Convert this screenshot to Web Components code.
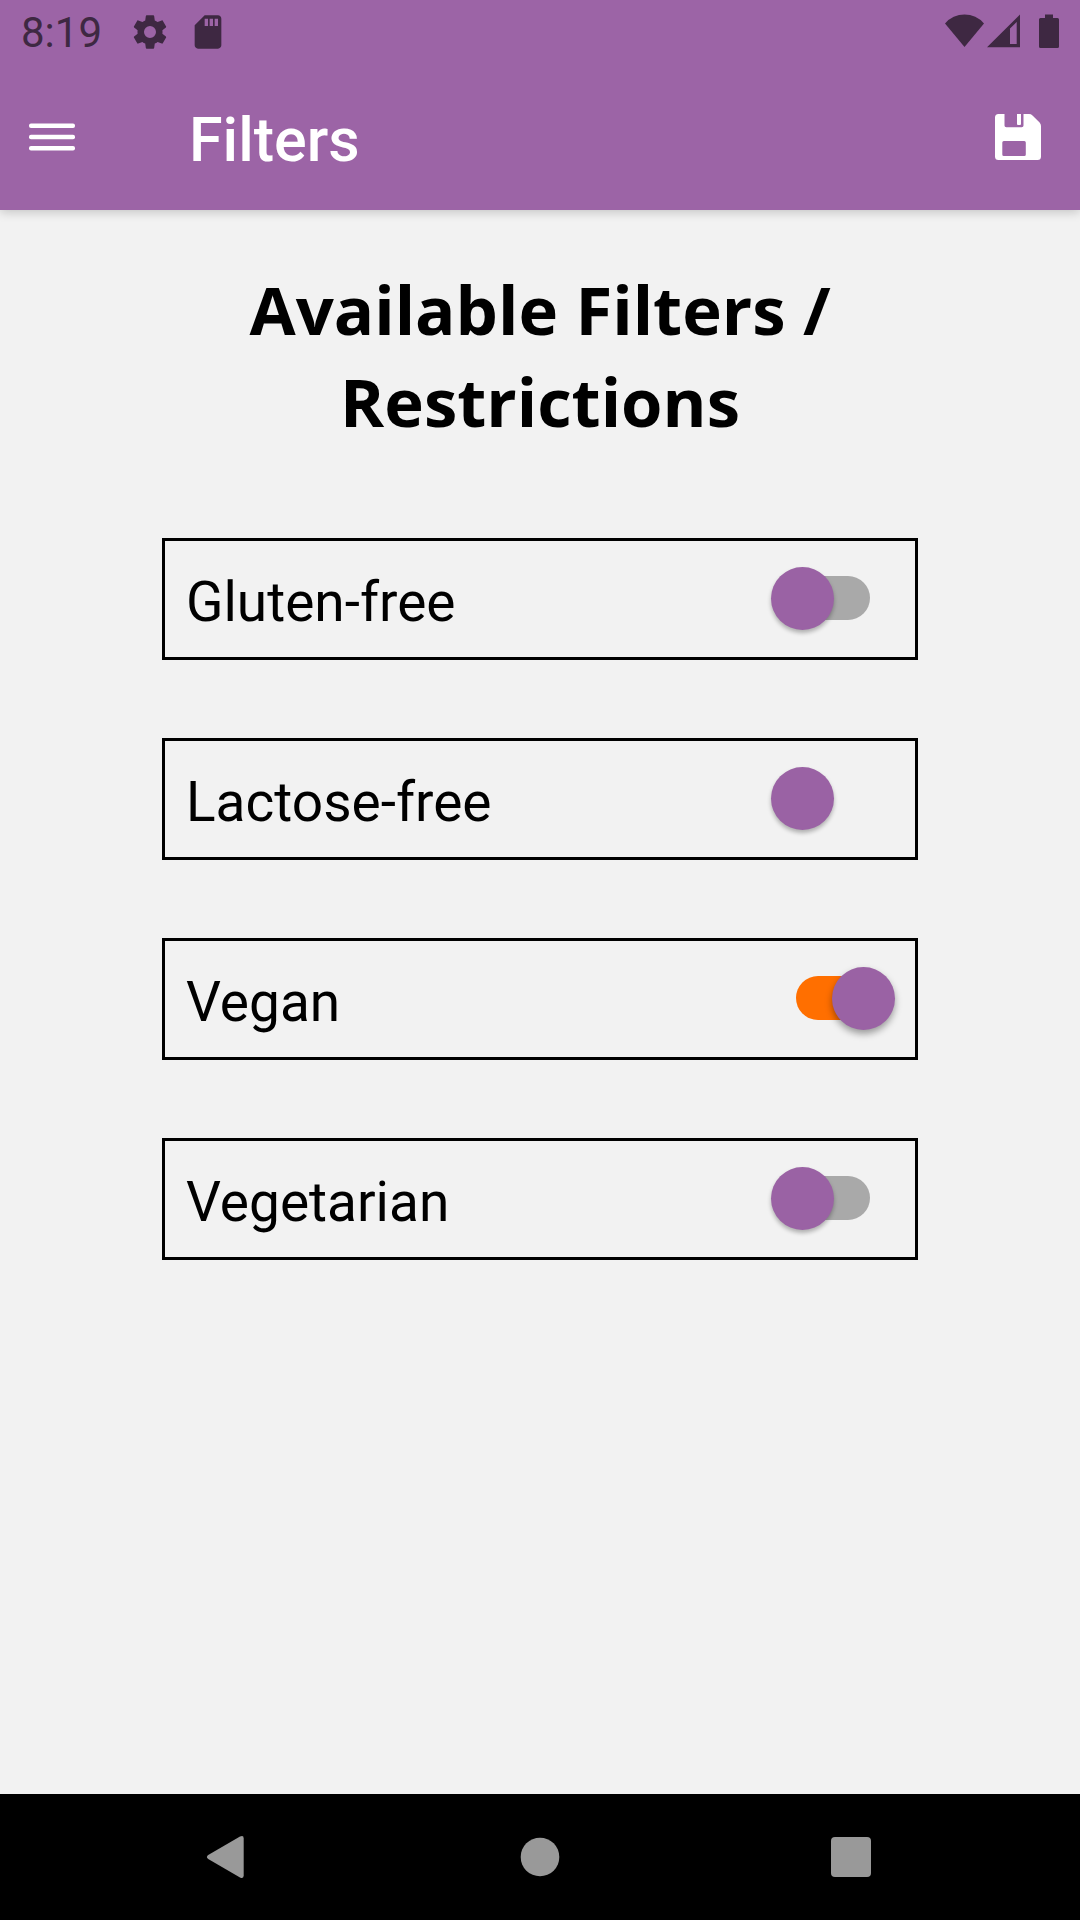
<!DOCTYPE html>
<html lang="en">
<head>
<meta charset="utf-8">
<meta name="viewport" content="width=device-width, initial-scale=1">
<title>Filters</title>
<style>
  html, body { margin: 0; min-height: 100%; }
  body {
    --primary: #9c64a6;
    --accent: #ff6f00;
    --surface: #f2f2f2;
    --gutter: 21px;
    background: var(--surface);
    color: #000;
    font-family: Roboto, "Noto Sans", sans-serif;
  }
</style>
</head>
<body>
<filters-app></filters-app>

<script>
const define = (name, markup) => {
  const template = document.createElement('template');
  template.innerHTML = markup;
  customElements.define(name, class extends HTMLElement {
    constructor() {
      super();
      this.attachShadow({ mode: 'open' }).append(template.content.cloneNode(true));
    }
  });
};

define('status-bar', `
  <style>
    :host {
      display: flex; align-items: center; justify-content: space-between;
      height: 63px; padding: 0 var(--gutter);
      color: #3e2842;
    }
    div { display: flex; align-items: center; }
    time { font-size: 42px; line-height: 60px; padding-top: 3px; margin-right: 28px; }
    svg { display: block; fill: currentColor; }
    .notices svg + svg { margin-left: 18px; }
    .system svg { margin-left: 3px; }
    .system .battery { margin-left: 19px; }
  </style>
  <div class="notices">
    <time>8:19</time>
    <svg width="40" height="40" viewBox="0 0 24 24"><path d="M19.43 12.98c.04-.32.07-.64.07-.98s-.03-.66-.07-.98l2.11-1.65c.19-.15.24-.42.12-.64l-2-3.46c-.12-.22-.39-.3-.61-.22l-2.49 1c-.52-.4-1.08-.73-1.69-.98l-.38-2.65C14.46 2.18 14.25 2 14 2h-4c-.25 0-.46.18-.49.42l-.38 2.65c-.61.25-1.17.59-1.69.98l-2.49-1c-.23-.09-.49 0-.61.22l-2 3.46c-.13.22-.07.49.12.64l2.11 1.65c-.04.32-.07.65-.07.98s.03.66.07.98l-2.11 1.65c-.19.15-.24.42-.12.64l2 3.46c.12.22.39.3.61.22l2.49-1c.52.4 1.08.73 1.69.98l.38 2.65c.03.24.24.42.49.42h4c.25 0 .46-.18.49-.42l.38-2.65c.61-.25 1.17-.59 1.69-.98l2.49 1c.23.09.49 0 .61-.22l2-3.46c.12-.22.07-.49-.12-.64l-2.11-1.65zM12 15.6a3.6 3.6 0 1 1 0-7.2 3.6 3.6 0 0 1 0 7.2z"/></svg>
    <svg width="40" height="40" viewBox="0 0 24 24"><path d="M18 2h-8L4 8v12c0 1.1.9 2 2 2h12c1.1 0 2-.9 2-2V4c0-1.1-.9-2-2-2zm-6 6.4h-2V4h2v4.400zm3 0h-2V4h2v4.400zm3 0h-2V4h2v4.400z"/></svg>
  </div>
  <div class="system">
    <svg width="39" height="35" viewBox="0 0 39 35"><path d="M0 9.500A25.600 25.600 0 0 1 39 9.500L19.500 33z"/></svg>
    <svg width="33" height="35" viewBox="0 0 33 35"><path fill-rule="evenodd" d="M0 33.300L33 .500V33.300zM23 14.500V30h6.700V8z"/></svg>
    <svg class="battery" width="20" height="35" viewBox="0 0 20 35"><path d="M6 .500h8V4h4.500Q20 4 20 5.500V32.500Q20 34 18.500 34h-17Q0 34 0 32.500V5.500Q0 4 1.500 4H6z"/></svg>
  </div>
`);

define('app-header', `
  <style>
    :host {
      display: flex; align-items: center;
      height: 147px; padding: 0 var(--gutter);
      color: #fff;
    }
    h1 {
      flex: 1; margin: 0; padding: 6px 0 0 106px;
      font-size: 61px; line-height: 74px; font-weight: 500;
    }
    button {
      display: grid; place-items: center; width: 62px; height: 62px;
      border: 0; padding: 0; background: none; color: inherit;
    }
    .save { margin-right: 10px; }
    svg { display: block; fill: currentColor; }
  </style>
  <button class="menu" aria-label="Open menu">
    <svg width="46" height="46" viewBox="0 0 46 46"><rect y="9.500" width="46" height="4.400" rx="2"/><rect y="20.800" width="46" height="4.400" rx="2"/><rect y="32.100" width="46" height="4.400" rx="2"/></svg>
  </button>
  <h1><slot></slot></h1>
  <button class="save" aria-label="Save filters">
    <svg width="46" height="46" viewBox="0 0 46 46"><path fill-rule="evenodd" d="M3.500 0H9.500V11.500Q9.500 13.300 11.300 13.300H26.700Q28.500 13.300 28.500 11.500V0H34Q36 0 37.500 1.400L44.600 8.500Q46 10 46 12V42.500Q46 46 42.500 46H3.500Q0 46 0 42.500V3.500Q0 0 3.500 0zM8.800 27Q7.300 27 7.300 28.500V40.500Q7.300 42 8.800 42H29.300Q30.800 42 30.800 40.500V28.500Q30.800 27 29.300 27z"/><path d="M22 0h4V10Q26 11 25 11H23Q22 11 22 10z"/></svg>
  </button>
`);

define('filter-switch', `
  <style>
    :host { display: block; }
    label {
      display: flex; align-items: center; justify-content: space-between;
      box-sizing: border-box; height: 122px;
      border: 3px solid #000; padding: 0 20px 2px 21px;
    }
    span { padding-top: 7px; font-size: 55px; line-height: 66px; }
    input {
      appearance: none; display: grid; align-items: center;
      width: 124px; height: 64px; margin: 0;
    }
    input::before, input::after { content: ""; grid-area: 1 / 1; }
    input::before {
      justify-self: center; width: 74px; height: 44px;
      border-radius: 22px; background: #a9a9a9;
    }
    input::after {
      justify-self: start; width: 63px; height: 63px; border-radius: 50%;
      background: #9a62a4; box-shadow: 0 3px 4px rgba(0, 0, 0, .28);
    }
    input:checked::before { background: var(--accent); }
    input:checked::after {
      justify-self: end; box-shadow: 0 4px 7px rgba(0, 0, 0, .36);
    }
    :host([trackless]) input::before { background: none; }
  </style>
  <label><span><slot></slot></span><input type="checkbox" role="switch"></label>
`);

define('filter-list', `
  <style>
    :host { display: block; padding: 53px 15% 0; }
    h2 {
      margin: 0 0 91px; text-align: center;
      font-family: "Open Sans", "Noto Sans", sans-serif;
      font-size: 67px; line-height: 92px; font-weight: 700;
    }
    div { display: flex; flex-direction: column; gap: 78px; }
  </style>
  <h2>Available Filters / Restrictions</h2>
  <div><slot></slot></div>
`);

define('nav-bar', `
  <style>
    :host {
      display: flex; justify-content: center; gap: 185px;
      height: 126px; background: #000; color: #999;
    }
    button {
      display: grid; place-items: center; width: 126px;
      border: 0; padding: 0; background: none; color: inherit;
    }
    svg { display: block; fill: currentColor; }
  </style>
  <button aria-label="Back"><svg width="48" height="48" viewBox="0 0 48 48"><path d="M3.200 22L35 3.600Q38.700 1.800 38.700 5.500V42.500Q38.700 46.200 35 44.400L3.200 26Q.600 24 3.200 22z"/></svg></button>
  <button aria-label="Home"><svg width="48" height="48" viewBox="0 0 48 48"><circle cx="24" cy="24" r="19.300"/></svg></button>
  <button aria-label="Recent apps"><svg width="48" height="48" viewBox="0 0 48 48"><rect x="4" y="4" width="40" height="40" rx="4"/></svg></button>
`);

define('filters-app', `
  <style>
    :host { display: flex; flex-direction: column; min-height: 100vh; }
    header { background: var(--primary); box-shadow: 0 2px 10px rgba(0, 0, 0, .2); }
    filter-list { flex: 1; }
  </style>
  <header>
    <status-bar></status-bar>
    <app-header>Filters</app-header>
  </header>
  <filter-list>
    <filter-switch>Gluten-free</filter-switch>
    <filter-switch trackless>Lactose-free</filter-switch>
    <filter-switch on>Vegan</filter-switch>
    <filter-switch>Vegetarian</filter-switch>
  </filter-list>
  <nav-bar></nav-bar>
`);

/* A switch marked "on" starts checked. */
document.querySelector('filters-app').shadowRoot
  .querySelectorAll('filter-switch[on]')
  .forEach(item => { item.shadowRoot.querySelector('input').checked = true; });
</script>
</body>
</html>
